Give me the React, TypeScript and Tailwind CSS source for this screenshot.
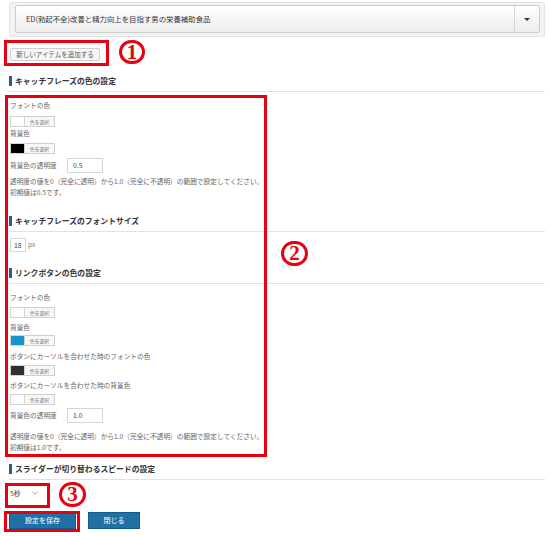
import React from 'react';

const RED = 'border-[#e50012]';

const Heading = ({ title, className = '' }: { title: string; className?: string }) => (
  <div className={className}>
    <div className="flex items-center h-[10px] gap-[3px]">
      <span className="w-[3px] h-[10px] bg-[#2b5d88]" />
      <span className="text-[7.8px] leading-[10px] font-bold text-[#333]">{title}</span>
    </div>
    <div className="mt-[5px] h-px bg-[#e2e2e2]" />
  </div>
);

const Label = ({ text, className = '' }: { text: string; className?: string }) => (
  <div className={`h-[10px] leading-[10px] text-[6.7px] text-[#666] pl-[1px] ${className}`}>{text}</div>
);

const ColorPick = ({ color, className = '' }: { color: string; className?: string }) => (
  <div className={`flex h-[11px] ml-[1px] ${className}`}>
    <div className="w-[15px] h-full border border-[#d4d4d4]" style={{ backgroundColor: color }} />
    <div className="w-[30px] h-full border border-l-0 border-[#cfcfcf] bg-[#f7f7f7] flex items-center justify-center text-[4.8px] text-[#777]">
      色を選択
    </div>
  </div>
);

const OpacityRow = ({ value, className = '' }: { value: string; className?: string }) => (
  <div className={`flex items-center h-[15px] pl-[1px] ${className}`}>
    <span className="w-[57px] text-[6.7px] text-[#666]">背景色の透明度</span>
    <div className="w-[36px] h-[15px] border border-[#d6d6d6] flex items-center pl-[5px] text-[6.8px] text-[#444]">
      {value}
    </div>
  </div>
);

const Note = ({ init, className = '' }: { init: string; className?: string }) => (
  <div className={`text-[6.7px] leading-[11px] text-[#666] pl-[1px] ${className}`}>
    <div>透明度の値を0（完全に透明）から1.0（完全に不透明）の範囲で設定してください。</div>
    <div>初期値は{init}です。</div>
  </div>
);

const Circled = ({ n, className }: { n: string; className: string }) => (
  <div
    className={`absolute rounded-full border-[3px] ${RED} text-[#e50012] font-['Liberation_Serif',serif] font-bold text-[21px] leading-none flex items-center justify-center ${className}`}
  >
    {n}
  </div>
);

export default function App() {
  return (
    <div className="relative w-[550px] h-[536px] bg-white overflow-hidden font-['Noto_Sans_CJK_JP','Noto_Sans',sans-serif]">
      <div className="pl-[9px] pr-[5px] pt-[2px]">
        {/* item selector */}
        <div className="h-[35px] border border-[#e3e3e3] bg-[#f3f3f3] rounded-[2px] pl-[5px] pr-[4px] pt-[2px]">
          <div className="flex h-[28px] border border-[#cdcdcd] bg-gradient-to-b from-white to-[#ededed] rounded-[2px]">
            <div className="flex-1 flex items-center pl-[10px] text-[7.4px] text-[#333]">
              ED(勃起不全)改善と精力向上を目指す男の栄養補助食品
            </div>
            <div className="w-[25px] border-l border-[#d6d6d6] flex items-center justify-center">
              <span className="w-0 h-0 border-l-[3px] border-r-[3px] border-t-[3px] border-l-transparent border-r-transparent border-t-[#1e3553]" />
            </div>
          </div>
        </div>

        <button className="mt-[11px] ml-[1px] w-[90px] h-[13px] border border-[#cfcfcf] bg-[#f7f7f7] rounded-[2px] text-[6.5px] text-[#555] flex items-center justify-center">
          新しいアイテムを追加する
        </button>

        <Heading title="キャッチフレーズの色の設定" className="mt-[15px]" />
        <Label text="フォントの色" className="mt-[8px]" />
        <ColorPick color="#ffffff" className="mt-[6px]" />
        <Label text="背景色" className="mt-[1px]" />
        <ColorPick color="#000000" className="mt-[5px]" />
        <OpacityRow value="0.5" className="mt-[4px]" />
        <Note init="0.5" className="mt-[3px]" />

        <Heading title="キャッチフレーズのフォントサイズ" className="mt-[18px]" />
        <div className="flex items-center mt-[6px] h-[14px] pl-[1px]">
          <div className="w-[16px] h-[14px] border border-[#d6d6d6] flex items-center pl-[3px] text-[6.8px] text-[#444]">18</div>
          <span className="ml-[2px] text-[6.5px] text-[#777]">px</span>
        </div>

        <Heading title="リンクボタンの色の設定" className="mt-[16px]" />
        <Label text="フォントの色" className="mt-[8px]" />
        <ColorPick color="#ffffff" className="mt-[5px]" />
        <Label text="背景色" className="mt-[4px]" />
        <ColorPick color="#1894cd" className="mt-[3px]" />
        <Label text="ボタンにカーソルを合わせた時のフォントの色" className="mt-[5px]" />
        <ColorPick color="#2f2f2f" className="mt-[4px]" />
        <Label text="ボタンにカーソルを合わせた時の背景色" className="mt-[4px]" />
        <ColorPick color="#ffffff" className="mt-[4px]" />
        <OpacityRow value="1.0" className="mt-[3px]" />
        <Note init="1.0" className="mt-[8px]" />

        <Heading title="スライダーが切り替わるスピードの設定" className="mt-[11px]" />
        <div className="mt-[6px] w-[32px] h-[14px] flex items-center justify-between pl-[1px] pr-[3px] text-[6.8px] text-[#444]">
          <span>5秒</span>
          <svg width="6" height="4" viewBox="0 0 6 4" fill="none" stroke="#888" strokeWidth="0.8">
            <path d="M0.5 0.8 L3 3.2 L5.5 0.8" />
          </svg>
        </div>

        <div className="mt-[12px] flex gap-[12px]">
          <button className="w-[67px] h-[17px] bg-[#1f71a5] border border-[#155b87] text-white text-[7px] flex items-center justify-center">
            設定を保存
          </button>
          <button className="w-[52px] h-[17px] bg-[#1f71a5] border border-[#155b87] text-white text-[7px] flex items-center justify-center">
            閉じる
          </button>
        </div>
      </div>

      {/* annotations */}
      <div className={`absolute left-[4px] top-[40px] w-[105px] h-[26px] border-[3px] ${RED}`} />
      <Circled n="1" className="left-[119px] top-[40px] w-[26px] h-[24px]" />
      <div className={`absolute left-[5px] top-[95px] w-[262px] h-[362px] border-[3px] ${RED}`} />
      <Circled n="2" className="left-[281px] top-[241px] w-[27px] h-[25px]" />
      <div className={`absolute left-[5px] top-[483px] w-[45px] h-[25px] border-[3px] ${RED}`} />
      <Circled n="3" className="left-[59px] top-[482px] w-[27px] h-[25px]" />
      <div className={`absolute left-[4px] top-[511px] w-[76px] h-[21px] border-[3px] ${RED}`} />
    </div>
  );
}
